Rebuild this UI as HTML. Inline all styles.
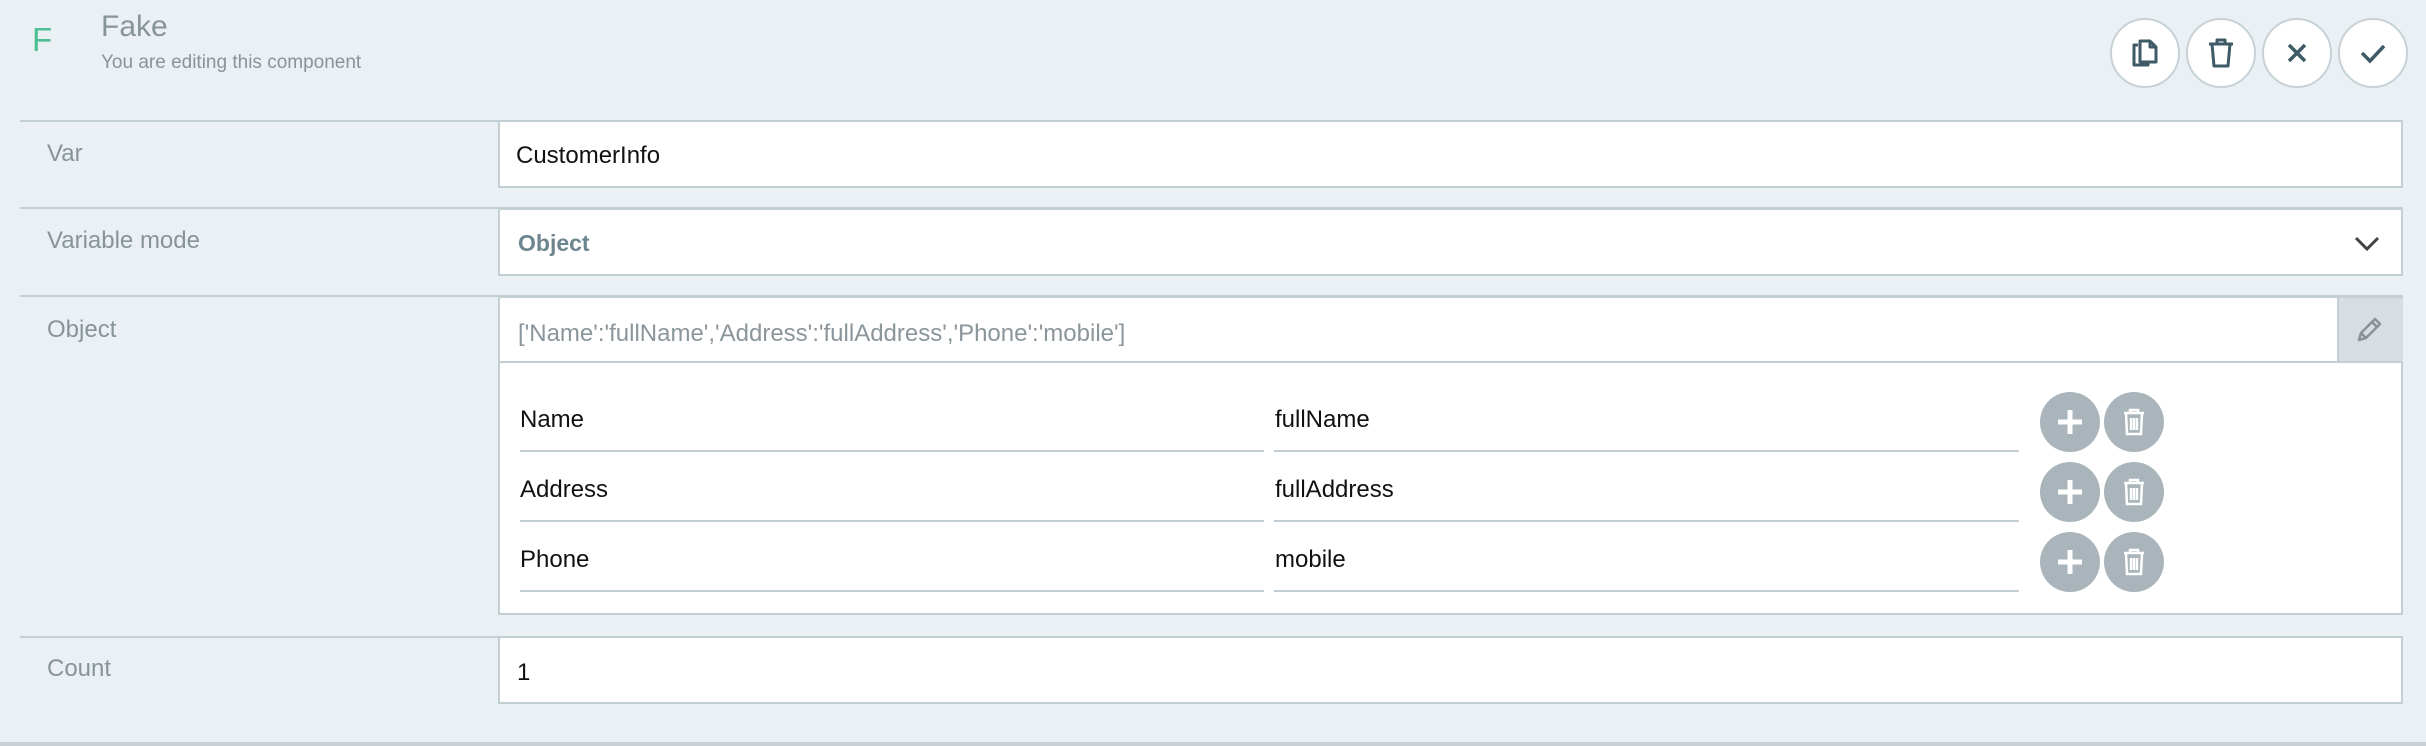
<!DOCTYPE html>
<html><head><style>
body{margin:0;width:2426px;height:746px;background:#ebf0f4;position:relative;overflow:hidden;font-family:"Liberation Sans",sans-serif;}
.a{position:absolute}
.line{position:absolute;left:20px;width:2383px;height:2px;background:#c3ced5}
.lbl{position:absolute;left:47px;font-size:24px;color:#87949a}
.box{position:absolute;left:498px;width:1905px;background:#fff;border:2px solid #c3ced5;box-sizing:border-box}
.txt{position:absolute;font-size:24px;color:#111}
.hb{position:absolute;top:18px;width:70px;height:70px;border-radius:50%;background:#fff;border:2px solid #c7d2d7;box-sizing:border-box;display:flex;align-items:center;justify-content:center}
.ul{position:absolute;height:2px;background:#c3ced5}
.cb{position:absolute;width:60px;height:60px;border-radius:50%;background:#a9b5bb;display:flex;align-items:center;justify-content:center}
</style></head><body>
<div class="a" style="left:32px;top:21px;font-size:33px;color:#4cbf93">F</div>
<div class="a" style="left:101px;top:10px;font-size:30px;color:#87949a">Fake</div>
<div class="a" style="left:101px;top:52px;font-size:19px;color:#87949a">You are editing this component</div>

<div class="hb" style="left:2110px"><svg width="30" height="32" viewBox="0 0 30 32" fill="none" stroke="#3d5a66" stroke-width="3" stroke-linejoin="round"><path d="M8 8H4v20h14v-3"/><path d="M10 4h10l6 6v15H10z"/><path d="M20 4v6h6"/></svg></div>
<div class="hb" style="left:2186px"><svg width="28" height="32" viewBox="0 0 28 32" fill="none" stroke="#3d5a66" stroke-width="3" stroke-linejoin="round"><path d="M2 7h24M10 7V3h8v4M5 7l2 22h14l2-22"/></svg></div>
<div class="hb" style="left:2262px"><svg width="22" height="22" viewBox="0 0 22 22" stroke="#3d5a66" stroke-width="3.5"><path d="M3 3l16 16M19 3L3 19"/></svg></div>
<div class="hb" style="left:2338px"><svg width="28" height="22" viewBox="0 0 28 22" fill="none" stroke="#3d5a66" stroke-width="3.5"><path d="M3 11l8 8L25 4"/></svg></div>

<div class="line" style="top:120px"></div>
<div class="lbl" style="top:140px">Var</div>
<div class="box" style="top:120px;height:68px"></div>
<div class="txt" style="left:516px;top:142px">CustomerInfo</div>

<div class="line" style="top:207px"></div>
<div class="lbl" style="top:227px">Variable mode</div>
<div class="box" style="top:208px;height:68px"></div>
<div class="txt" style="left:518px;top:230px;color:#6d858f;font-weight:bold;font-size:23px">Object</div>
<svg class="a" style="left:2354px;top:236px" width="26" height="16" viewBox="0 0 26 16" fill="none" stroke="#444" stroke-width="3"><path d="M2 2l11 11L24 2"/></svg>

<div class="line" style="top:295px"></div>
<div class="lbl" style="top:316px">Object</div>
<div class="box" style="top:296px;height:67px;background:#fff"></div>
<div class="a" style="left:2337px;top:298px;width:64px;height:63px;background:#d6dee2;border-left:2px solid #c3ced5"></div>
<svg class="a" style="left:2355px;top:314px" width="30" height="30" viewBox="0 0 30 30" fill="none" stroke="#8a9296" stroke-width="2.5" stroke-linejoin="round"><path d="M4 26l2-7L20 5l5 5L11 24z M17 8l5 5 M6 19l5 5"/></svg>
<div class="txt" style="left:518px;top:320px;color:#8a969c">['Name':'fullName','Address':'fullAddress','Phone':'mobile']</div>
<div class="box" style="top:361px;height:254px"></div>

<div class="txt" style="left:520px;top:406px">Name</div>
<div class="txt" style="left:1275px;top:406px">fullName</div>
<div class="ul" style="left:520px;top:450px;width:744px"></div>
<div class="ul" style="left:1274px;top:450px;width:745px"></div>
<div class="txt" style="left:520px;top:476px">Address</div>
<div class="txt" style="left:1275px;top:476px">fullAddress</div>
<div class="ul" style="left:520px;top:520px;width:744px"></div>
<div class="ul" style="left:1274px;top:520px;width:745px"></div>
<div class="txt" style="left:520px;top:546px">Phone</div>
<div class="txt" style="left:1275px;top:546px">mobile</div>
<div class="ul" style="left:520px;top:590px;width:744px"></div>
<div class="ul" style="left:1274px;top:590px;width:745px"></div>

<div class="cb" style="left:2040px;top:392px"><svg width="28" height="28" viewBox="0 0 28 28" stroke="#fff" stroke-width="5"><path d="M14 2v24M2 14h24"/></svg></div>
<div class="cb" style="left:2104px;top:392px"><svg width="24" height="30" viewBox="0 0 24 30" fill="none" stroke="#fff" stroke-width="2.5"><path d="M2 6h20M8 6V3h8v3M4 6l1 21h14l1-21M9 11v12M12 11v12M15 11v12"/></svg></div>
<div class="cb" style="left:2040px;top:462px"><svg width="28" height="28" viewBox="0 0 28 28" stroke="#fff" stroke-width="5"><path d="M14 2v24M2 14h24"/></svg></div>
<div class="cb" style="left:2104px;top:462px"><svg width="24" height="30" viewBox="0 0 24 30" fill="none" stroke="#fff" stroke-width="2.5"><path d="M2 6h20M8 6V3h8v3M4 6l1 21h14l1-21M9 11v12M12 11v12M15 11v12"/></svg></div>
<div class="cb" style="left:2040px;top:532px"><svg width="28" height="28" viewBox="0 0 28 28" stroke="#fff" stroke-width="5"><path d="M14 2v24M2 14h24"/></svg></div>
<div class="cb" style="left:2104px;top:532px"><svg width="24" height="30" viewBox="0 0 24 30" fill="none" stroke="#fff" stroke-width="2.5"><path d="M2 6h20M8 6V3h8v3M4 6l1 21h14l1-21M9 11v12M12 11v12M15 11v12"/></svg></div>

<div class="line" style="top:636px"></div>
<div class="lbl" style="top:655px">Count</div>
<div class="box" style="top:636px;height:68px"></div>
<div class="txt" style="left:517px;top:659px">1</div>

<div class="line" style="top:742px;left:0;width:2426px;height:4px;background:#c9cfd2"></div>
</body></html>
